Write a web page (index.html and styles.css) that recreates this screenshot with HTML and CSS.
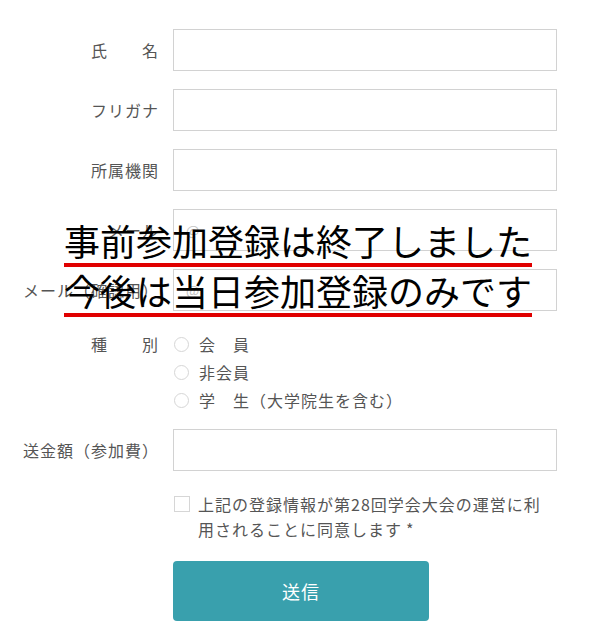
FILE: index.html
```html
<!DOCTYPE html>
<html lang="ja">
<head>
<meta charset="utf-8">
<title>参加登録</title>
<link rel="stylesheet" href="styles.css">
</head>
<body>
<div class="page">
  <form class="form">
    <div class="row first">
      <label class="label">氏　　名</label>
      <input class="field" type="text">
    </div>
    <div class="row">
      <label class="label">フリガナ</label>
      <input class="field" type="text">
    </div>
    <div class="row">
      <label class="label">所属機関</label>
      <input class="field" type="text">
    </div>
    <div class="row">
      <label class="label">メール</label>
      <input class="field" type="text" placeholder="@">
    </div>
    <div class="row">
      <label class="label">メール（確認用）</label>
      <input class="field" type="text" placeholder="@">
    </div>
    <div class="row row-radio">
      <span class="label label-top">種　　別</span>
      <div class="radios">
        <label class="opt"><input class="radio" type="radio" name="kind"><span>会　員</span></label>
        <label class="opt"><input class="radio" type="radio" name="kind"><span>非会員</span></label>
        <label class="opt"><input class="radio" type="radio" name="kind"><span>学　生（大学院生を含む）</span></label>
      </div>
    </div>
    <div class="row row-amount">
      <label class="label">送金額（参加費）</label>
      <input class="field" type="text">
    </div>
    <div class="row row-consent">
      <span></span>
      <label class="consent"><input class="check" type="checkbox"><span class="consent-text">上記の登録情報が第28回学会大会の運営に利用されることに同意します<span class="ast">*</span></span></label>
    </div>
    <div class="row row-submit">
      <span></span>
      <button class="submit" type="button">送信</button>
    </div>
  </form>
  <div class="notice">
    <div class="notice-line"><span>事前参加登録は終了しました</span></div>
    <div class="notice-line"><span>今後は当日参加登録のみです</span></div>
  </div>
</div>
</body>
</html>
```

FILE: styles.css
```css
* { box-sizing: border-box; }

body {
  margin: 0;
  background: #fff;
  font-family: "Noto Sans CJK JP", "Noto Sans", sans-serif;
  color: #555;
}

.page {
  position: relative;
  width: 592px;
  height: 635px;
  overflow: hidden;
}

.form {
  display: flex;
  flex-direction: column;
  padding-top: 29px;
}

.row {
  display: grid;
  grid-template-columns: 158px 384px;
  column-gap: 15px;
  align-items: center;
  margin-top: 18px;
}

.row.first { margin-top: 0; }

.label {
  text-align: right;
  font-size: 16px;
  letter-spacing: 1px;
  margin-right: -1px;
  line-height: 24px;
  color: #555;
  white-space: nowrap;
}

.field {
  height: 42px;
  width: 384px;
  border: 1px solid #d2d2d2;
  border-radius: 0;
  background: #fff;
  padding: 0 12px;
  font-family: inherit;
  font-size: 14px;
  color: #555;
  outline: none;
}

.field::placeholder { color: #c4c4c4; }

.row-radio {
  margin-top: 19px;
  align-items: start;
}

.label-top { line-height: 28px; }

.radios {
  display: flex;
  flex-direction: column;
}

.opt {
  display: flex;
  align-items: center;
  height: 28px;
  font-size: 16px;
  letter-spacing: 1px;
  color: #555;
}

.radio {
  appearance: none;
  -webkit-appearance: none;
  width: 15px;
  height: 15px;
  margin: 0 10px 0 1px;
  border: 1px solid #d6d6d6;
  border-radius: 50%;
  background: #fff;
}

.row-amount { margin-top: 15px; }

.row-consent {
  margin-top: 21px;
  align-items: start;
}

.consent {
  display: flex;
  align-items: flex-start;
  font-size: 16px;
  letter-spacing: 1px;
  line-height: 25px;
  color: #555;
}

.check {
  appearance: none;
  -webkit-appearance: none;
  flex: none;
  width: 16px;
  height: 16px;
  margin: 4px 8px 0 1px;
  border: 1px solid #d6d6d6;
  border-radius: 0;
  background: #fff;
}

.consent-text { width: 359px; }

.ast { margin-left: 4px; }

.row-submit { margin-top: 19px; }

.submit {
  width: 256px;
  height: 60px;
  border: none;
  border-radius: 4px;
  background: #39a0ad;
  color: #fff;
  font-family: inherit;
  font-size: 18px;
  letter-spacing: 1px;
}

.notice {
  position: absolute;
  top: 217px;
  left: 64px;
  display: flex;
  flex-direction: column;
  align-items: flex-start;
}

.notice-line span {
  display: inline-block;
  font-size: 36px;
  line-height: 46px;
  color: #000;
  border-bottom: 4px solid #e00000;
  white-space: nowrap;
}
```
